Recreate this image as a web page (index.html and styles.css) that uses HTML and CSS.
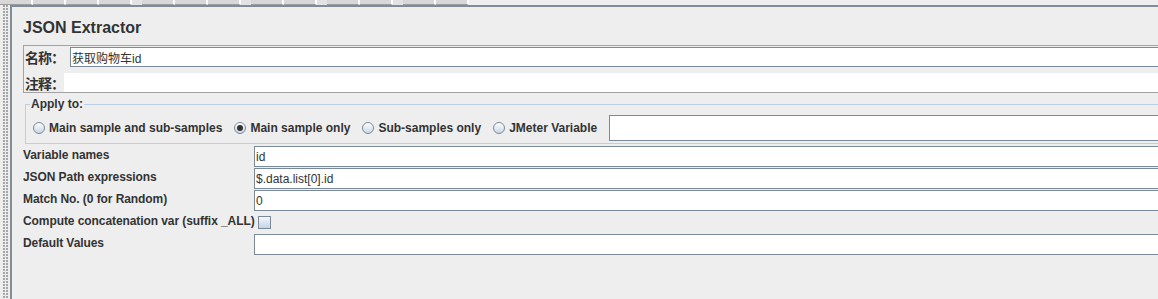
FILE: index.html
```html
<!DOCTYPE html>
<html lang="zh">
<head>
    <meta charset="UTF-8">
    <title>JSON Extractor</title>
    <link rel="stylesheet" href="styles.css">
</head>
<body>
    <!-- bottom edge of the toolbar above -->
    <div class="toolbar-edge">
        <span class="tab"></span><span class="tab"></span><span class="tab"></span><span class="tab"></span>
        <span class="tab-gap"></span>
        <span class="tab"></span><span class="tab"></span><span class="tab"></span>
        <span class="tab-gap"></span>
        <span class="tab"></span><span class="tab"></span>
        <span class="tab-gap"></span>
        <span class="tab"></span><span class="tab"></span>
        <span class="tab-gap"></span>
        <span class="tab"></span><span class="tab"></span>
    </div>

    <div class="frame">
        <div class="splitter"><div class="grip"></div></div>

        <div class="panel">
            <h1 class="title">JSON Extractor</h1>

            <!-- Name / comments -->
            <div class="name-box">
                <div class="name-row">
                    <label class="name-label">名称：</label>
                    <input class="text-field" type="text" value="获取购物车id">
                </div>
                <div class="comment-row">
                    <label class="comment-label">注释：</label>
                    <div class="comment-field"></div>
                </div>
            </div>

            <!-- Apply to -->
            <fieldset class="apply">
                <legend>Apply to:</legend>
                <div class="apply-row">
                    <label class="radio"><span class="radio-mark"></span>Main sample and sub-samples</label>
                    <label class="radio"><span class="radio-mark checked"></span>Main sample only</label>
                    <label class="radio"><span class="radio-mark"></span>Sub-samples only</label>
                    <label class="radio last"><span class="radio-mark"></span>JMeter Variable</label>
                    <input class="text-field var-field" type="text" value="">
                </div>
            </fieldset>

            <!-- Extractor settings -->
            <div class="params">
                <label class="param-label">Variable names</label>
                <input class="text-field" type="text" value="id">

                <label class="param-label">JSON Path expressions</label>
                <input class="text-field" type="text" value="$.data.list[0].id">

                <label class="param-label">Match No. (0 for Random)</label>
                <input class="text-field" type="text" value="0">

                <label class="param-label">Compute concatenation var (suffix _ALL)</label>
                <div class="check-cell"><span class="check"></span></div>

                <label class="param-label">Default Values</label>
                <input class="text-field" type="text" value="">
            </div>
        </div>
    </div>
</body>
</html>
```

FILE: styles.css
```css
* {
    box-sizing: border-box;
}

body {
    margin: 0;
    background: #eeeeee;
    color: #333333;
    font-family: "Liberation Sans", Arial, "Noto Sans CJK SC", sans-serif;
    font-size: 12px;
    overflow: hidden;
}

/* toolbar remnant */
.toolbar-edge {
    display: flex;
    height: 5px;
}

.tab {
    width: 33px;
    background: #d8d8d8;
    border-right: 2px solid #ffffff;
    border-bottom: 1px solid #9c9c9c;
}

.tab-gap {
    width: 10px;
    background: #e3e3e3;
}

.frame {
    display: flex;
    height: 294px;
}

.splitter {
    width: 10px;
    flex: none;
    padding: 0 1px 0 3px;
}

.grip {
    height: 100%;
    background-image: radial-gradient(circle at 1px 1px, #a5a5a5 0.8px, transparent 1.1px);
    background-size: 3px 3px;
}

.panel {
    flex: 1;
    margin-right: -40px;
    border-top: 2px solid #7f8c99;
    border-left: 2px solid #7f8c99;
    padding-left: 11px;
}

.title {
    margin: 11px 0 7px;
    font-size: 16px;
    line-height: 20px;
    font-weight: bold;
}

.text-field {
    display: block;
    width: 100%;
    height: 21px;
    margin: 0;
    padding: 0 2px 0 1px;
    border: 1px solid #7a8a99;
    border-radius: 0;
    background: #ffffff;
    color: #333333;
    font-family: "Liberation Sans", Arial, "Noto Sans CJK SC", sans-serif;
    font-size: 12px;
    outline: none;
}

/* name / comments */
.name-box {
    border: 1px solid #a3a3a3;
    border-right: none;
    padding: 1px 0 0 1px;
}

.name-row {
    display: flex;
    align-items: center;
}

.name-row .text-field {
    flex: 1;
    height: 20px;
}

.name-label,
.comment-label {
    flex: none;
    font-family: "Noto Sans CJK SC", sans-serif;
    font-size: 14px;
    line-height: 16px;
    font-weight: bold;
    letter-spacing: -1px;
}

.name-label {
    width: 45px;
}

.comment-row {
    display: flex;
    align-items: center;
    margin-top: 6px;
}

.comment-label {
    width: 39px;
}

.comment-field {
    flex: 1;
    height: 19px;
    background: #ffffff;
}

/* apply to */
.apply {
    margin: 4px 0 0 2px;
    padding: 0 0 2px 7px;
    border: 1px solid #b8cfe5;
    border-right: none;
    min-width: 0;
}

.apply legend {
    margin-left: -3px;
    padding: 0 1px;
    font-weight: bold;
    line-height: 14px;
}

.apply-row {
    display: flex;
    align-items: center;
    margin-top: 4px;
}

.radio {
    display: flex;
    align-items: center;
    gap: 4px;
    margin-right: 12px;
    font-weight: bold;
    white-space: nowrap;
}

.radio.last {
    margin-right: 12px;
}

.radio-mark {
    position: relative;
    width: 12px;
    height: 12px;
    border: 1px solid #7a8a99;
    border-radius: 50%;
    background: linear-gradient(#ffffff, #c8d6e5);
}

.radio-mark.checked::after {
    content: "";
    position: absolute;
    left: 2px;
    top: 2px;
    width: 6px;
    height: 6px;
    border-radius: 50%;
    background: #333333;
}

.var-field {
    flex: 1;
    height: 26px;
}

/* settings grid */
.params {
    display: grid;
    grid-template-columns: 231px 1fr;
    grid-auto-rows: 21px;
    row-gap: 1px;
    margin-top: 2px;
}

.param-label {
    padding-top: 2px;
    line-height: 14px;
    font-weight: bold;
    letter-spacing: -0.08px;
    white-space: nowrap;
}

.check-cell {
    display: flex;
    align-items: center;
}

.check {
    width: 13px;
    height: 13px;
    margin-left: 4px;
    border: 1px solid #7a8a99;
    background: linear-gradient(#f4f7fa, #c5d4e4);
}
```
